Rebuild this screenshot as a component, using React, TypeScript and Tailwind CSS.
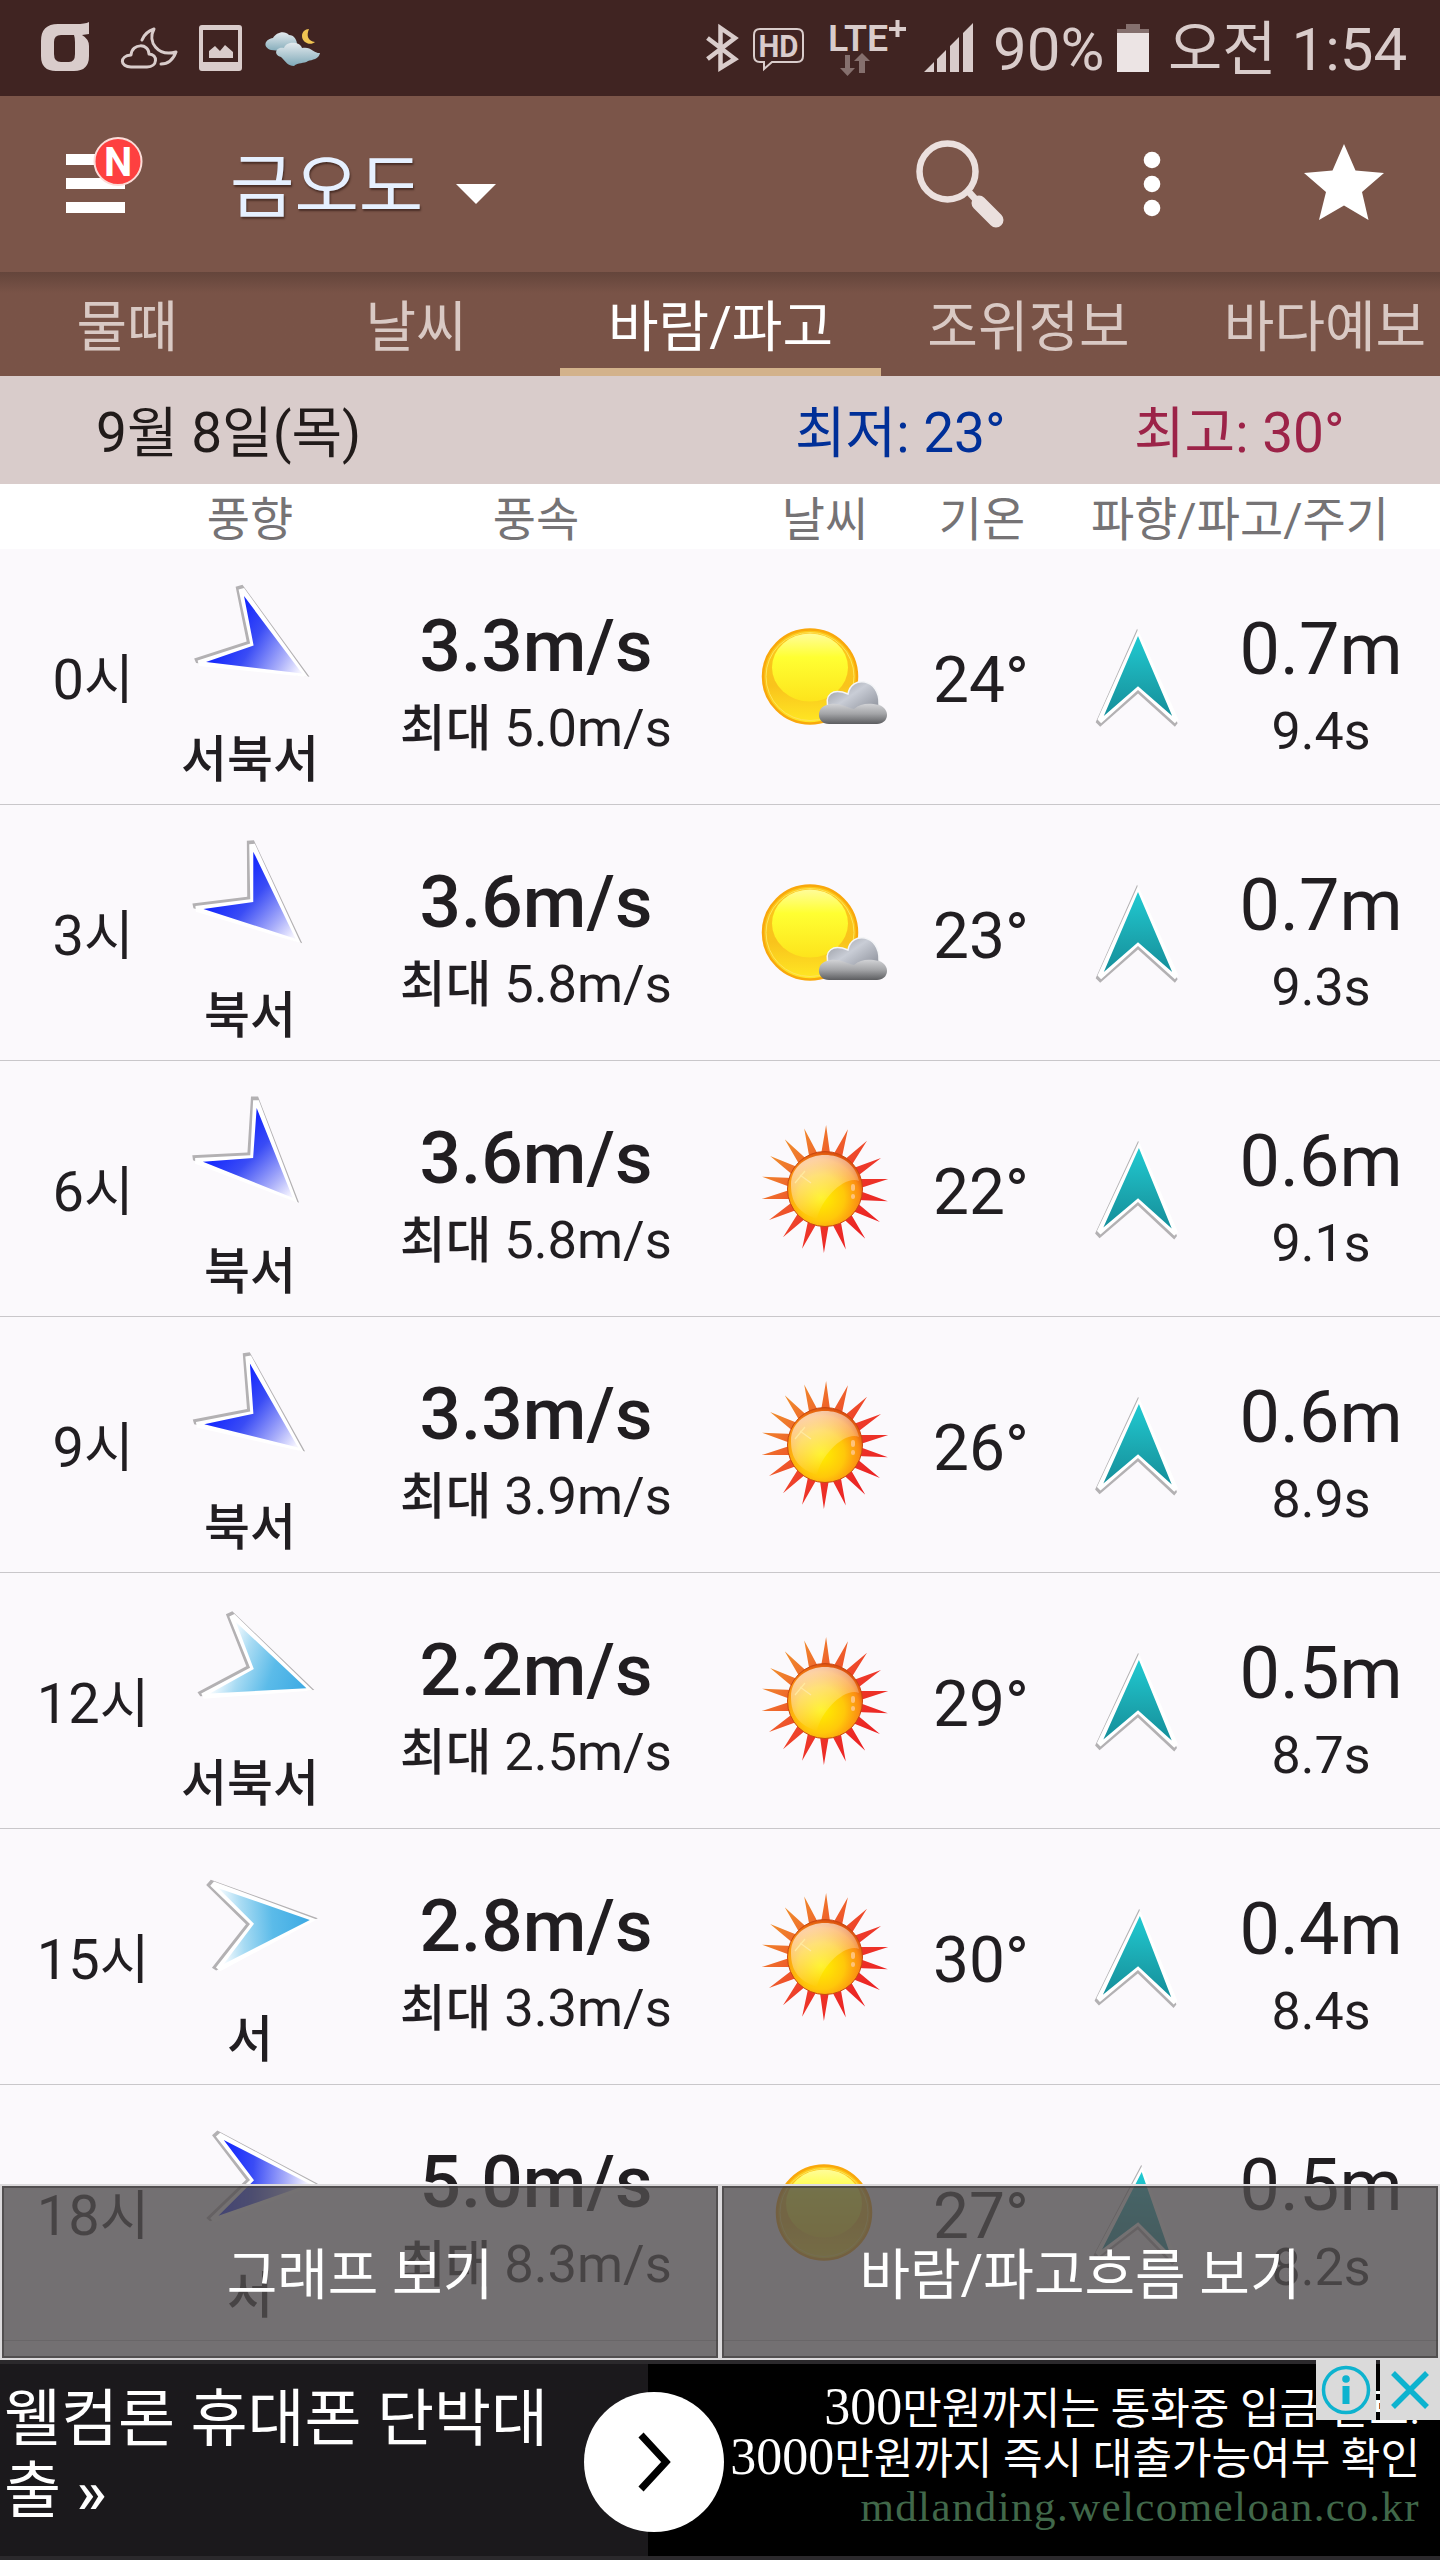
import React from "react";

type Sky = "partly" | "sunny" | "clear";

interface Forecast {
  hour: string;
  direction: string;
  windAngle: number;
  strong: boolean;
  speed: string;
  gust: string;
  sky: Sky;
  temp: string;
  waveAngle: number;
  wave: string;
  period: string;
}

const forecasts: Forecast[] = [
  { hour: "0", direction: "서북서", windAngle: 120, strong: true, speed: "3.3", gust: "5.0", sky: "partly", temp: "24", waveAngle: 0, wave: "0.7", period: "9.4" },
  { hour: "3", direction: "북서", windAngle: 131, strong: true, speed: "3.6", gust: "5.8", sky: "partly", temp: "23", waveAngle: 0, wave: "0.7", period: "9.3" },
  { hour: "6", direction: "북서", windAngle: 135, strong: true, speed: "3.6", gust: "5.8", sky: "sunny", temp: "22", waveAngle: 1, wave: "0.6", period: "9.1" },
  { hour: "9", direction: "북서", windAngle: 127, strong: true, speed: "3.3", gust: "3.9", sky: "sunny", temp: "26", waveAngle: 1, wave: "0.6", period: "8.9" },
  { hour: "12", direction: "서북서", windAngle: 110, strong: false, speed: "2.2", gust: "2.5", sky: "sunny", temp: "29", waveAngle: 1, wave: "0.5", period: "8.7" },
  { hour: "15", direction: "서", windAngle: 86, strong: false, speed: "2.8", gust: "3.3", sky: "sunny", temp: "30", waveAngle: 2, wave: "0.4", period: "8.4" },
  { hour: "18", direction: "서", windAngle: 94, strong: true, speed: "5.0", gust: "8.3", sky: "clear", temp: "27", waveAngle: 4, wave: "0.5", period: "8.2" },
];

const columns =
  "grid grid-cols-[186px_128px_444px_134px_178px_134px_236px] whitespace-nowrap";

const Gradients: React.FC = () => (
  <svg className="absolute h-0 w-0" aria-hidden="true">
    <defs>
      <linearGradient id="strong" gradientUnits="userSpaceOnUse" x1="0" y1="-56" x2="0" y2="28">
        <stop offset="0" stopColor="#f4f3ff" />
        <stop offset="0.25" stopColor="#a9aefa" />
        <stop offset="0.65" stopColor="#3a4cf5" />
        <stop offset="1" stopColor="#1226ff" />
      </linearGradient>
      <linearGradient id="weak" gradientUnits="userSpaceOnUse" x1="0" y1="-56" x2="0" y2="30">
        <stop offset="0" stopColor="#3fabe4" />
        <stop offset="0.4" stopColor="#5bbbe9" />
        <stop offset="0.75" stopColor="#a8dbf3" />
        <stop offset="1" stopColor="#f8fcff" />
      </linearGradient>
      <linearGradient id="wave" gradientUnits="userSpaceOnUse" x1="0" y1="-56" x2="0" y2="28">
        <stop offset="0" stopColor="#20c8d0" />
        <stop offset="0.6" stopColor="#1ba5ae" />
        <stop offset="1" stopColor="#15909c" />
      </linearGradient>
      <linearGradient id="ray" x1="0" y1="0" x2="1" y2="1">
        <stop offset="0.1" stopColor="#f09a2c" />
        <stop offset="0.55" stopColor="#ee3a2a" />
        <stop offset="1" stopColor="#e9131f" />
      </linearGradient>
      <radialGradient id="core" cx="0.45" cy="0.62" r="0.62">
        <stop offset="0" stopColor="#fff000" />
        <stop offset="0.5" stopColor="#ffc80a" />
        <stop offset="0.82" stopColor="#fb8c12" />
        <stop offset="1" stopColor="#d84c10" />
      </radialGradient>
      <linearGradient id="gloss" x1="0" y1="0" x2="0.4" y2="1">
        <stop offset="0" stopColor="#fff" stopOpacity="0.75" />
        <stop offset="1" stopColor="#fff" stopOpacity="0" />
      </linearGradient>
      <linearGradient id="ball" x1="0" y1="0" x2="0" y2="1">
        <stop offset="0" stopColor="#fcc81a" />
        <stop offset="0.6" stopColor="#f9c31c" />
        <stop offset="1" stopColor="#ffe824" />
      </linearGradient>
      <linearGradient id="ballTop" x1="0" y1="0" x2="0" y2="1">
        <stop offset="0" stopColor="#fffc9a" />
        <stop offset="0.35" stopColor="#ffff32" />
        <stop offset="1" stopColor="#fde41c" />
      </linearGradient>
      <linearGradient id="cloud" x1="0" y1="0" x2="1" y2="0.9">
        <stop offset="0" stopColor="#8e9199" />
        <stop offset="0.45" stopColor="#c9cdd6" />
        <stop offset="1" stopColor="#858993" />
      </linearGradient>
      <linearGradient id="cloudBase" x1="0" y1="0" x2="0" y2="1">
        <stop offset="0" stopColor="#d2d3d6" />
        <stop offset="0.5" stopColor="#a3a4a7" />
        <stop offset="1" stopColor="#5c5d60" />
      </linearGradient>
      <linearGradient id="puff" x1="0" y1="0" x2="0" y2="1">
        <stop offset="0" stopColor="#e4eaee" />
        <stop offset="1" stopColor="#7fa9b8" />
      </linearGradient>
    </defs>
  </svg>
);

const Arrow: React.FC<{ angle: number; fill: string; scale?: number }> = ({
  angle,
  fill,
  scale = 1,
}) => (
  <svg
    className="h-[128px] w-[128px] overflow-visible"
    viewBox="-65 -64 128 128"
  >
    <g transform={`rotate(${angle}) scale(${scale})`}>
      <path d="M-1 -67L44 38L41 42L0 5L-42 42L-47 37Z" fill="#b3b1b3" />
      <path d="M0 -66L45 34L41 38L0 1L-41 38L-45 34Z" fill="#fff" />
      <path d="M0 -59L38 30L0 -3L-38 30Z" fill={fill} />
    </g>
  </svg>
);

const rays = Array.from({ length: 18 }, (_, i) => {
  const at = (deg: number, r: number) => {
    const rad = ((deg - 90) * Math.PI) / 180;
    return `${(r * Math.cos(rad)).toFixed(1)} ${(r * Math.sin(rad)).toFixed(1)}`;
  };
  const a = i * 20 + 1;
  return `M${at(a - 8, 34)}L${at(a, 64)}L${at(a + 8, 34)}Z`;
}).join("");

const SkyIcon: React.FC<{ sky: Sky }> = ({ sky }) => {
  if (sky === "sunny") {
    return (
      <svg className="h-[134px] w-[134px]" viewBox="-67 -67 134 134">
        <path d={rays} fill="url(#ray)" />
        <circle r="37.500" fill="url(#core)" stroke="#c9480f" strokeWidth="1" />
        <path
          d="M-34 -4C-34 -40 26 -46 34 -8C20 -14 -4 10 -8 30C-26 24 -34 14 -34 -4Z"
          fill="url(#gloss)"
        />
        <path d="M-25 -14L-14 -6M-30 -6L-20 -18" stroke="#ffe9a0" strokeWidth="1.2" />
        <path d="M28 -3v3M28 7v1" stroke="#ffc27a" strokeWidth="4" strokeLinecap="round" />
      </svg>
    );
  }
  const shift = sky === "clear" ? -1 : -15;
  return (
    <svg className="h-[134px] w-[134px]" viewBox="-67 -67 134 134">
      <g transform={`translate(${shift} -0.5)`}>
        <circle r="47" fill="url(#ball)" stroke="#f9a80c" strokeWidth="2.5" />
        <circle r="44" fill="none" stroke="#ffe45a" strokeWidth="1" />
        <ellipse cy="-9" rx="38" ry="34" fill="url(#ballTop)" />
      </g>
      {sky === "partly" && (
        <g>
          <path
            d="M4 33C-2 17 8 11 23 17C26 -2 55 1 54 27L56 38H4Z"
            fill="url(#cloud)"
            stroke="#f4f5f7"
            strokeWidth="1.5"
          />
          <path
            d="M2 28C12 24 20 30 29 32C36 26 44 26 54 28C66 32 64 47 52 47H4C-9 47 -9 30 2 28Z"
            fill="url(#cloudBase)"
          />
        </g>
      )}
    </svg>
  );
};

const StatusBar: React.FC = () => (
  <div className="flex h-24 bg-[#402422] text-[60px] leading-[64px] text-[#d9cccb]">
    <svg className="h-24 w-[700px] shrink-0" viewBox="0 0 700 96">
      <path
        d="M89 22V34L82 35Q89 39 89 46V56Q89 71 74 71H56Q41 71 41 56V41Q41 24 58 24H76Q85 24 89 22ZM61 35Q54 35 54 42V54Q54 62 61 62H69Q75 62 75 54V42Q75 38 74 35Z"
        fill="#d9cccb"
        fillRule="evenodd"
      />
      <g fill="none" stroke="#d9cccb" strokeWidth="3" strokeLinejoin="round" strokeLinecap="round">
        <path d="M131 67H147C158 67 158 54 149 54C149 43 132 43 131 55C119 56 120 67 131 67Z" />
        <path d="M142 40Q145 32 154 29C147 42 158 57 176 52C173 60 168 64 161 64" />
      </g>
      <path d="M202 25H239Q242 25 242 28V68Q242 71 239 71H202Q199 71 199 68V28Q199 25 202 25ZM203 30V62H238V30Z" fill="#d9cccb" fillRule="evenodd" />
      <path d="M209 58V51L215 46L220 51L225 45L233 52V58Z" fill="#d9cccb" />
      <path d="M309 29C306 36 308 41 315 42C311 46 302 43 302 36C302 32 305 29 309 29Z" fill="#f0c452" />
      <path d="M271 50C262 47 265 39 273 38C276 32 285 30 289 35C294 35 297 40 297 44L290 52Z" fill="url(#puff)" />
      <path d="M281 57C272 54 277 46 284 48C286 41 300 41 302 48C311 46 313 53 320 53C319 59 312 60 308 61C304 64 298 62 294 66C288 66 286 62 281 57Z" fill="url(#puff)" />
    </svg>
    <svg className="h-24 w-[290px] shrink-0" viewBox="700 0 290 96">
      <path d="M707.500 38L735 59L720.500 68V28L735 38L707.500 59" fill="none" stroke="#d9cccb" strokeWidth="4.5" />
      <path d="M760 29H797Q803 29 803 35V56Q803 62 797 62H772L764 69V62H760Q754 62 754 56V35Q754 29 760 29Z" fill="none" stroke="#d9cccb" strokeWidth="2" />
      <text x="758.5" y="57" fontSize="31" fontWeight="700" textLength="40" lengthAdjust="spacingAndGlyphs" fill="#d9cccb">HD</text>
      <text x="828" y="51" fontSize="36" fontWeight="600" textLength="60" lengthAdjust="spacingAndGlyphs" fill="#d9cccb">LTE</text>
      <path d="M889 29H906M897.500 20V37" stroke="#d9cccb" strokeWidth="4" />
      <path d="M845 55H850V68H855L847.500 76L840 68H845ZM859 73V61H854L862 53L870 61H865V73Z" fill="#85706e" />
      <path d="M924 72L934 62V72ZM937 59L946 50V72H937ZM950 46L959 37V72H950ZM963 33L973 23V72H963Z" fill="#d9cccb" />
    </svg>
    <span className="mt-[18px] w-[127px] pl-[3px]">90%</span>
    <svg className="h-24 w-8 shrink-0" viewBox="1117 0 32 96">
      <path d="M1126 24H1140V29H1149V33H1117V29H1126Z" fill="#85706e" />
      <path d="M1117 33H1149V72H1117Z" fill="#ece4e4" />
    </svg>
    <span className="mt-[18px] whitespace-nowrap pl-[19px]">
      <span className="text-[59px]">오전</span> 1:54
    </span>
  </div>
);

const Header: React.FC = () => (
  <header className="flex h-[176px] bg-[#7b5549]">
    <svg className="h-[176px] w-[230px] shrink-0" viewBox="0 96 230 176">
      <path d="M66 154H125V165H66ZM66 178H125V189H66ZM66 202H125V213H66Z" fill="#fff" />
      <circle cx="118" cy="161.500" r="23.500" fill="#fe4040" stroke="#fbdcd8" strokeWidth="2" />
      <text x="118" y="176" textAnchor="middle" fontSize="40" fontWeight="700" fill="#fff">N</text>
    </svg>
    <div className="flex w-[226px] items-center pt-2 text-[70px] leading-none text-[#e6f0ff] [text-shadow:1px_2px_2px_rgba(40,20,15,0.6)]">
      금오도
    </div>
    <svg className="h-[176px] flex-1" viewBox="456 96 984 176">
      <path d="M456 184H496L476 204Z" fill="#fff" />
      <g fill="none" stroke="#ebe0de">
        <circle cx="947.500" cy="171.500" r="28" strokeWidth="6.500" />
        <path d="M968 191L977 201" strokeWidth="7" />
        <path d="M979 203L996 220" strokeWidth="15" strokeLinecap="round" />
      </g>
      <g fill="#fff">
        <circle cx="1152" cy="160" r="8.300" />
        <circle cx="1152" cy="184" r="8.300" />
        <circle cx="1152" cy="208" r="8.300" />
        <path d="M1344 144L1355.500 170.500L1384 173L1362 192L1368.500 220L1344 205.500L1319 220L1326 192L1304 173L1332.500 170.500Z" />
      </g>
    </svg>
  </header>
);

const Tabs: React.FC = () => (
  <nav className="flex h-[104px] bg-[#795347] bg-linear-to-b from-[#64453b] to-[#795347] to-20% text-center text-[55px] leading-[111px] text-[#d9c9c4]">
    <a className="w-[254px]">물때</a>
    <a className="w-[306px] pl-[18px]">날씨</a>
    <a className="h-[104px] w-[321px] border-b-8 border-[#d3b28b] text-white">바람/파고</a>
    <a className="w-[295px]">조위정보</a>
    <a className="w-[264px] pl-[34px]">바다예보</a>
  </nav>
);

const ForecastRow: React.FC<{ item: Forecast }> = ({ item }) => (
  <div className={`${columns} h-64 border-b border-[#c9c7ca] text-[#211e21]`}>
    <div className="pt-[99px] text-center text-[56px] leading-[64px]">
      {item.hour}
      <span className="text-[54px]">시</span>
    </div>
    <div className="flex flex-col items-center pt-[31px]">
      <Arrow angle={item.windAngle} fill={item.strong ? "url(#strong)" : "url(#weak)"} />
      <p className="mt-5 text-[50px] font-medium leading-[64px]">{item.direction}</p>
    </div>
    <div className="pt-[57px] text-center">
      <p className="text-[73px] font-medium leading-[80px]">{item.speed}m/s</p>
      <p className="text-[52.5px] leading-[84px]">
        <span className="text-[49.5px] font-medium">최대</span> {item.gust}m/s
      </p>
    </div>
    <div className="pt-[61px]">
      <SkyIcon sky={item.sky} />
    </div>
    <div className="pt-[100px] text-center text-[64px] leading-[64px]">
      {item.temp}°
    </div>
    <div className="flex justify-center pt-[76px]">
      <Arrow angle={item.waveAngle} fill="url(#wave)" scale={0.9} />
    </div>
    <div className="pr-[2px] pt-[61px] text-center">
      <p className="text-[72px] leading-[80px]">{item.wave}m</p>
      <p className="text-[52px] leading-[84px]">{item.period}s</p>
    </div>
  </div>
);

const AdBanner: React.FC = () => (
  <aside className="relative flex h-[200px] border-y-4 border-[#2b292c] bg-black text-white">
    <div className="w-[648px] whitespace-nowrap bg-[#1b191c] pl-1 pt-5 text-[62px] leading-[72px]">
      웰컴론 휴대폰 단박대
      <br />출 <span className="font-medium">»</span>
    </div>
    <div className="flex-1 whitespace-nowrap pr-5 pt-[19px] text-right text-[43px] leading-[48px]">
      <p>
        <span className="font-[Liberation_Serif] text-[52px]">300</span>만원까지는 통화중 입금 완료!
      </p>
      <p>
        <span className="font-[Liberation_Serif] text-[52px]">3000</span>만원까지 즉시 대출가능여부 확인
      </p>
      <p className="font-[Liberation_Serif] tracking-[1.4px] text-[#41684a]">
        mdlanding.welcomeloan.co.kr
      </p>
    </div>
    <div className="absolute left-[584px] top-[28px] flex h-[140px] w-[140px] items-center justify-center rounded-full bg-white">
      <svg className="h-16 w-10" viewBox="0 0 40 64" fill="none" stroke="#000" strokeWidth="7">
        <path d="M7 5L32 32L7 59" />
      </svg>
    </div>
    <div className="absolute -top-1 right-0 flex gap-1">
      <svg className="h-[60px] w-[60px] bg-[#dadada]" viewBox="0 0 60 60">
        <circle cx="30" cy="30" r="22.500" fill="none" stroke="#0db3cf" strokeWidth="3.500" />
        <circle cx="30" cy="19" r="3.800" fill="#0db3cf" />
        <path d="M30 26V44" stroke="#0db3cf" strokeWidth="7" />
      </svg>
      <svg className="h-[60px] w-[60px] bg-[#dadada]" viewBox="0 0 60 60">
        <path d="M13 13L47 47M47 13L13 47" stroke="#0db3cf" strokeWidth="5.500" />
      </svg>
    </div>
  </aside>
);

const App: React.FC = () => {
  return (
    <main className="h-[2560px] w-[1440px] overflow-hidden bg-[#fbf9fc] font-[Roboto,'Noto_Sans_CJK_KR',sans-serif]">
      <Gradients />
      <StatusBar />
      <Header />
      <Tabs />

      <div className="flex h-[108px] whitespace-nowrap bg-[#d9cccb] text-[55px] leading-[115px]">
        <p className="w-[795px] pl-[96px] text-[#211b1a]">9월 8일(목)</p>
        <p className="w-[339px] text-[#002f98]">최저: 23°</p>
        <p className="text-[#9c2348]">최고: 30°</p>
      </div>

      <div className={`${columns} h-[65px] bg-white text-center text-[47px] leading-[71px] text-[#757375]`}>
        <span className="col-start-2">풍향</span>
        <span>풍속</span>
        <span>날씨</span>
        <span className="pl-[2px]">기온</span>
        <span className="col-span-2 pr-[30px]">파향/파고/주기</span>
      </div>

      <section className="relative h-[1811px] overflow-hidden">
        {forecasts.map((item) => (
          <ForecastRow key={item.hour} item={item} />
        ))}
        <div className="absolute bottom-0 left-0 flex h-[176px] w-full text-[55px] text-white">
          <button className="w-[720px] border-2 border-[#dcdadc] bg-[#514e4f]/80 bg-clip-padding pt-1.5 shadow-[inset_0_0_0_2px_rgba(60,57,58,0.6)]">
            그래프 보기
          </button>
          <button className="w-[720px] border-2 border-[#dcdadc] bg-[#514e4f]/80 bg-clip-padding pt-1.5 shadow-[inset_0_0_0_2px_rgba(60,57,58,0.6)]">
            바람/파고흐름 보기
          </button>
        </div>
      </section>

      <AdBanner />
    </main>
  );
};

export default App;
